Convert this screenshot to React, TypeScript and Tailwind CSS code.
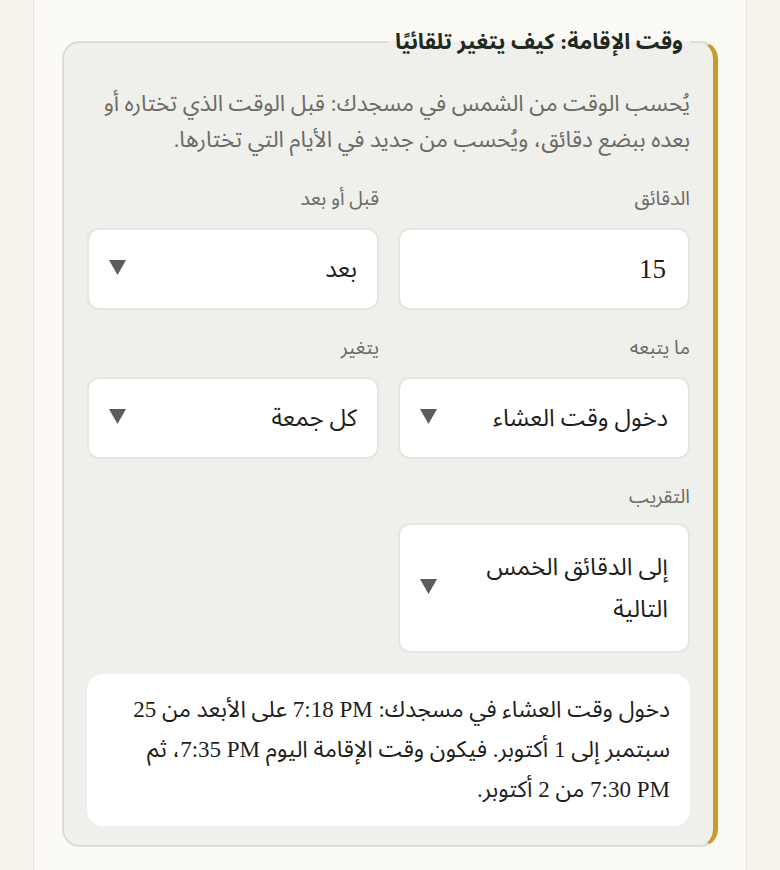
import React from 'react'

function Caret() {
  return (
    <svg width="17" height="15" viewBox="0 0 17 15" className="mb-[4px] shrink-0">
      <path d="M0 0 H17 L8.5 15 Z" fill="#5c5c58" />
    </svg>
  )
}

// Latin runs (times, numbers) read left to right inside the Arabic text
function Lat({ children }: { children: React.ReactNode }) {
  return (
    <span dir="ltr" className="whitespace-nowrap">
      {children}
    </span>
  )
}

function Field({ label, children }: { label: string; children: React.ReactNode }) {
  return (
    <div className="flex flex-col gap-[16px]">
      <label className="text-[19.5px] leading-[26px] text-[#6b6a65]">{label}</label>
      {children}
    </div>
  )
}

function SelectBox({ value, tall }: { value: React.ReactNode; tall?: boolean }) {
  return (
    <div
      className={`flex items-center justify-between rounded-[12px] border-2 border-[#e6e5e0] bg-white pr-[20px] pl-[20px] ${
        tall ? 'h-[130px]' : 'h-[82px]'
      }`}
    >
      <span className="text-[24px] leading-[42px] text-[#1e1e1c]">{value}</span>
      <Caret />
    </div>
  )
}

export default function App() {
  return (
    <div dir="rtl" className="min-h-[870px] bg-[#f6f3ec] font-['Liberation_Serif','Noto_Sans_Arabic',serif]">
      <div className="mx-[33px] min-h-[870px] border-x border-[#ece4d0] bg-[#fcfaf4] px-[28px] pt-[28px] pb-[20px]">
        <fieldset className="rounded-[18px] border-2 border-r-[5px] border-[#dedcd4] border-r-[#c89b2f] bg-[#efefeb] pr-[23px] pl-[23px] pt-[30px] pb-[19px]">
          <legend className="px-[7px] text-[22px] font-bold leading-[28px] text-[#1d2a22]">
            وقت الإقامة: كيف يتغير تلقائيًا
          </legend>
          <p className="text-[22.5px] leading-[36px] text-[#6b6a65]">
            يُحسب الوقت من الشمس في مسجدك: قبل الوقت الذي تختاره أو بعده ببضع دقائق، ويُحسب من جديد في الأيام التي تختارها.
          </p>
          <div className="mt-[28px] grid grid-cols-2 gap-x-[19px] gap-y-[25px]">
            <Field label="الدقائق">
              <div className="flex h-[82px] items-center rounded-[12px] border-2 border-[#e6e5e0] bg-white pr-[22px]">
                <span className="text-[27px] text-[#1e1e1c]">15</span>
              </div>
            </Field>
            <Field label="قبل أو بعد">
              <SelectBox value="بعد" />
            </Field>
            <Field label="ما يتبعه">
              <SelectBox value="دخول وقت العشاء" />
            </Field>
            <Field label="يتغير">
              <SelectBox value="كل جمعة" />
            </Field>
            <div className="flex flex-col gap-[13px]">
              <label className="text-[19.5px] leading-[26px] text-[#6b6a65]">التقريب</label>
              <SelectBox tall value={<>إلى الدقائق الخمس<br />التالية</>} />
            </div>
          </div>
          <div className="mt-[21px] rounded-[16px] bg-white pr-[20px] pl-[8px] py-[16px] text-[23px] leading-[40px] text-[#1e1e1c]">
            دخول وقت العشاء في مسجدك: <Lat>7:18 PM</Lat> على الأبعد من <Lat>25</Lat> سبتمبر إلى <Lat>1</Lat> أكتوبر. فيكون وقت الإقامة اليوم <Lat>7:35 PM</Lat>، ثم <Lat>7:30 PM</Lat> من <Lat>2</Lat> أكتوبر.
          </div>
        </fieldset>
      </div>
    </div>
  )
}
